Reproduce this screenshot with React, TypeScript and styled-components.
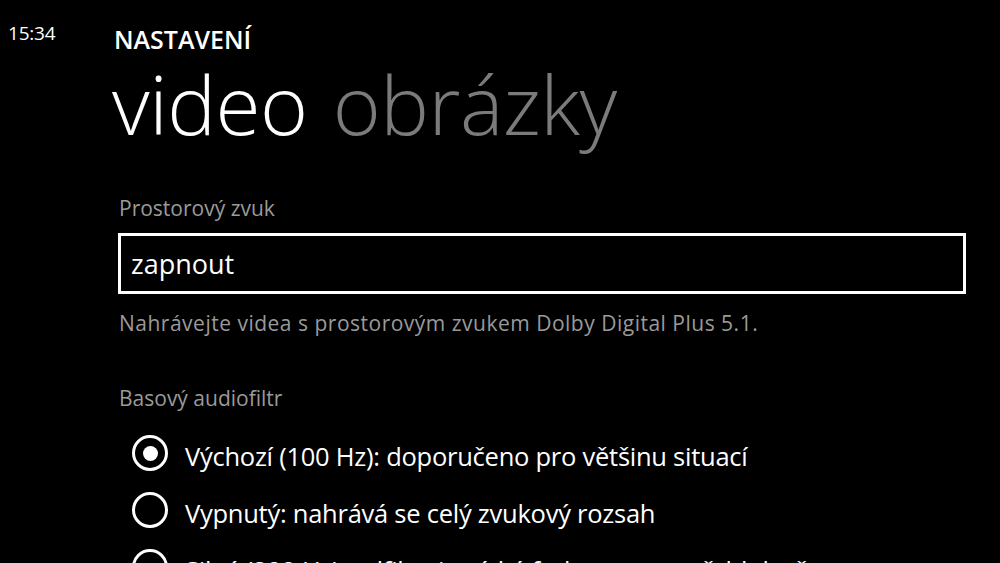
import React from "react";
import styled, { createGlobalStyle } from "styled-components";

const Global = createGlobalStyle`
  html, body { margin: 0; padding: 0; background: #000; }
  body { width: 1000px; height: 563px; overflow: hidden; font-family: "Open Sans", "Noto Sans", sans-serif; color: #fff; }
`;

const Screen = styled.div`
  display: flex;
  width: 1000px;
  height: 563px;
  overflow: hidden;
  background: #000;
`;

const StatusColumn = styled.div`
  width: 112px;
  flex: none;
  padding: 21px 0 0 8px;
  box-sizing: border-box;
`;

const Clock = styled.div`
  font-size: 19px;
  line-height: 24px;
  letter-spacing: -0.2px;
  color: #fff;
`;

const Main = styled.div`
  flex: 1;
  display: flex;
  flex-direction: column;
`;

const AppTitle = styled.div`
  margin-top: 23px;
  margin-left: 2px;
  font-size: 25px;
  font-weight: 600;
  line-height: 32px;
  letter-spacing: 0px;
`;

const Pivot = styled.div`
  display: flex;
  gap: 25px;
  margin-top: 2px;
  height: 92px;
  align-items: flex-start;
`;

const PivotItem = styled.div<{ $active?: boolean }>`
  font-size: 82px;
  font-weight: 300;
  line-height: 92px;
  letter-spacing: -0.5px;
  color: ${(p) => (p.$active ? "#fff" : "#7b7b7b")};
`;

const Content = styled.div`
  display: flex;
  flex-direction: column;
  padding-left: 6px;
  padding-right: 34px;
`;

const Label = styled.div<{ $top: number }>`
  margin-top: ${(p) => p.$top}px;
  padding-left: 1px;
  font-size: 21px;
  line-height: 28px;
  color: #9a9a9a;
  letter-spacing: 0px;
`;

const Picker = styled.div`
  margin-top: 11px;
  height: 61px;
  box-sizing: border-box;
  border: 3px solid #fff;
  display: flex;
  align-items: center;
  padding-left: 10px;
  font-size: 27px;
  color: #fff;
`;

const Hint = styled.div`
  margin-top: 15px;
  padding-left: 1px;
  font-size: 21px;
  line-height: 28px;
  color: #9a9a9a;
  letter-spacing: 0.5px;
  white-space: nowrap;
`;

const RadioList = styled.div`
  display: flex;
  flex-direction: column;
  gap: 21px;
  margin-top: 23px;
  margin-left: 14px;
`;

const RadioRow = styled.div`
  display: flex;
  align-items: flex-start;
  gap: 17px;
  height: 36px;
`;

const RadioCircle = styled.div<{ $checked?: boolean }>`
  width: 36px;
  height: 36px;
  flex: none;
  box-sizing: border-box;
  border: 3px solid #fff;
  border-radius: 50%;
  display: flex;
  align-items: center;
  justify-content: center;
  &::after {
    content: "";
    width: 15px;
    height: 15px;
    border-radius: 50%;
    background: #fff;
    display: ${(p) => (p.$checked ? "block" : "none")};
  }
`;

const RadioText = styled.div`
  margin-top: 3px;
  font-size: 25.5px;
  line-height: 36px;
  letter-spacing: -0.25px;
  white-space: nowrap;
`;

const options = [
  { text: "Výchozí (100 Hz): doporučeno pro většinu situací", checked: true },
  { text: "Vypnutý: nahrává se celý zvukový rozsah", checked: false },
  { text: "Silný (200 Hz): odfiltruje nízké frekvence, např. hluk větru", checked: false },
];

export default function App() {
  return (
    <>
      <Global />
      <Screen>
        <StatusColumn>
          <Clock>15:34</Clock>
        </StatusColumn>
        <Main>
          <AppTitle>NASTAVENÍ</AppTitle>
          <Pivot>
            <PivotItem $active>video</PivotItem>
            <PivotItem>obrázky</PivotItem>
          </Pivot>
          <Content>
            <Label $top={45}>Prostorový zvuk</Label>
            <Picker>zapnout</Picker>
            <Hint>Nahrávejte videa s prostorovým zvukem Dolby Digital Plus 5.1.</Hint>
            <Label $top={47}>Basový audiofiltr</Label>
            <RadioList>
              {options.map((o) => (
                <RadioRow key={o.text}>
                  <RadioCircle $checked={o.checked} />
                  <RadioText>{o.text}</RadioText>
                </RadioRow>
              ))}
            </RadioList>
          </Content>
        </Main>
      </Screen>
    </>
  );
}
